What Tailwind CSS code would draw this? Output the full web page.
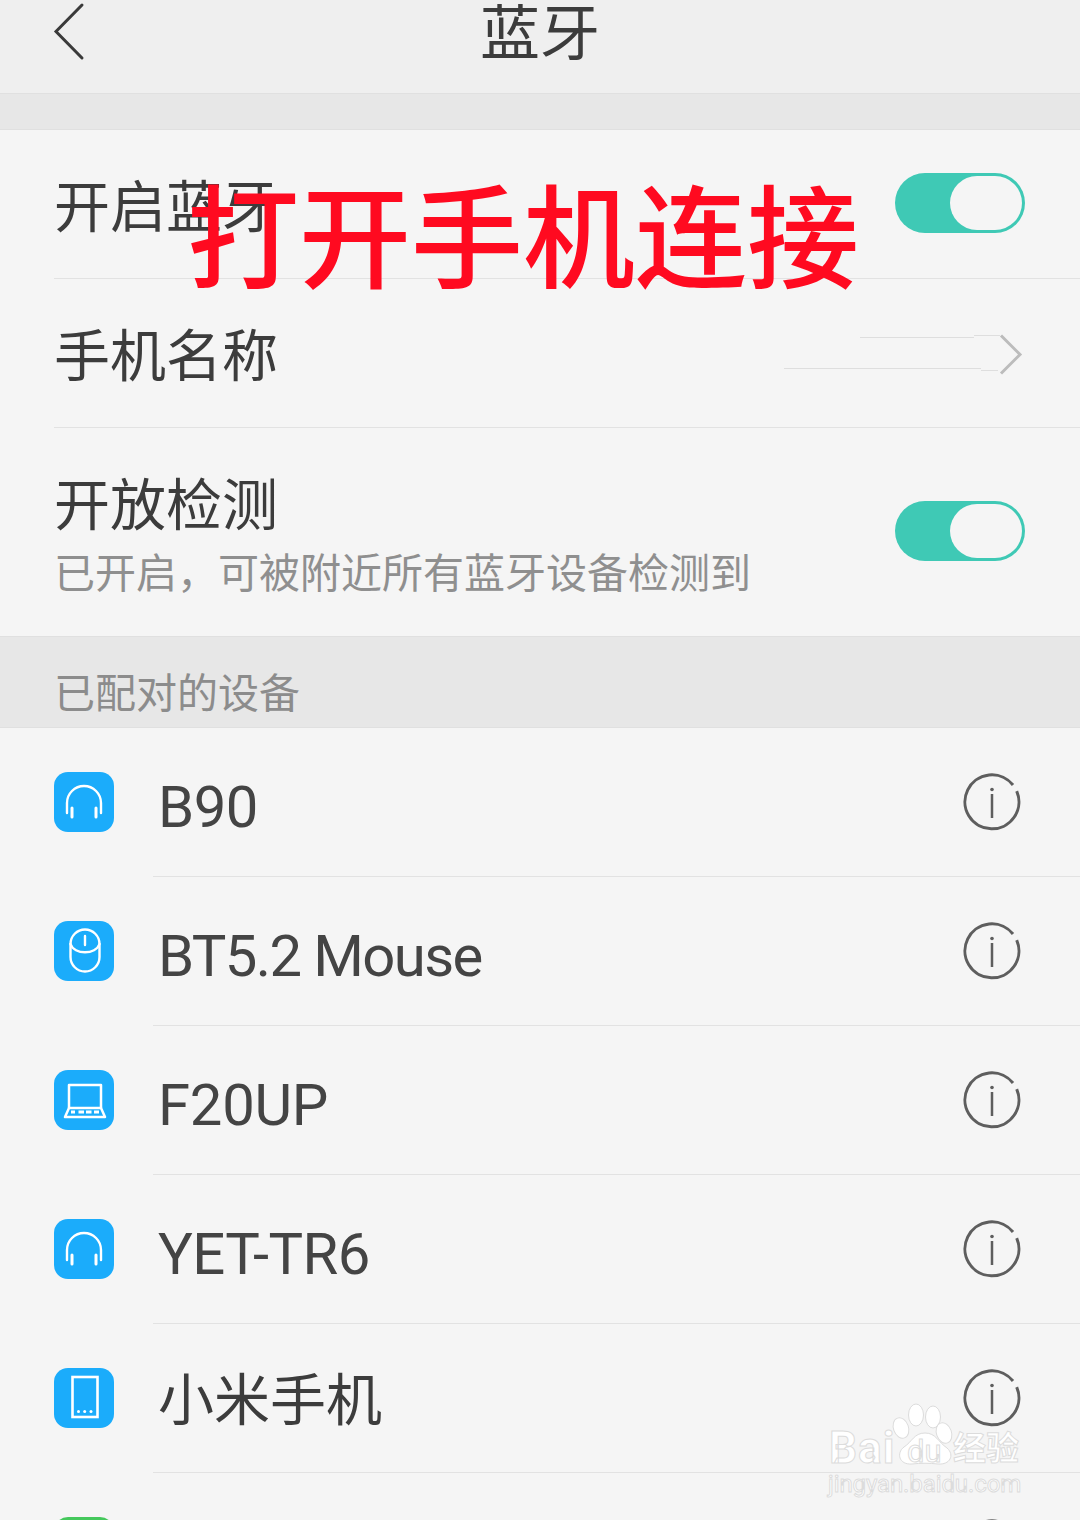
<!DOCTYPE html>
<html lang="zh-CN">
<head>
    <meta charset="UTF-8">
    <title>蓝牙</title>
    <script src="https://cdn.jsdelivr.net/npm/@tailwindcss/browser@4"></script>
</head>
<body class="bg-[#f5f5f5]">
<div class="relative w-[1080px] h-[1520px] overflow-hidden bg-[#f5f5f5] text-[#3c3c3c] font-['Roboto','Noto_Sans_CJK_SC',sans-serif]">

    <!-- header -->
    <header class="h-[94px] grid grid-cols-[1fr_auto_1fr] items-start bg-[#efefef] border-b border-[#e0e0e0]">
        <svg class="ml-[52px] mt-[2px]" width="36" height="60" viewBox="0 0 36 60" fill="none" stroke="#3a3a3a" stroke-width="3" stroke-linecap="round"><path d="M30 3 L4 29.5 L30 56"/></svg>
        <h1 class="text-[60px] leading-[70px] text-[#3c3c3c]">蓝牙</h1>
        <div></div>
    </header>
    <div class="h-[36px] bg-[#e7e7e7] border-b border-[#e0e0e0]"></div>

    <!-- settings -->
    <section class="pl-[54px]">
        <div class="h-[149px] flex items-center justify-between border-b border-[#e2e2e2]">
            <span class="text-[56px] leading-[64px] mt-[7px]">开启蓝牙</span>
            <div class="w-[130px] h-[60px] mr-[55px] mb-[3px] rounded-full bg-[#3fc9b5] flex justify-end p-[3px]">
                <div class="w-[72px] h-[54px] rounded-full bg-[#f5f5f5]"></div>
            </div>
        </div>
        <div class="relative h-[149px] flex items-center border-b border-[#e2e2e2]">
            <span class="text-[56px] leading-[64px] mt-[7px]">手机名称</span>
            <svg class="absolute left-[730px] top-[55px]" width="240" height="42" viewBox="0 0 240 42" fill="none">
                <path d="M76 3.5H190M190 1.5H216M0 34.5H197M197 36.5H214" stroke="#dedede" stroke-width="1"/>
                <path d="M217 1.5 L236 20.5 L217 39.5" stroke="#bcbcbc" stroke-width="3"/>
            </svg>
        </div>
        <div class="h-[208px] flex items-center justify-between">
            <div class="flex flex-col mt-[9px]">
                <span class="text-[56px] leading-[64px]">开放检测</span>
                <span class="text-[41px] leading-[50px] mt-[11px] text-[#8f8f8f]">已开启，可被附近所有蓝牙设备检测到</span>
            </div>
            <div class="w-[130px] h-[60px] mr-[55px] mb-[2px] rounded-full bg-[#3fc9b5] flex justify-end p-[3px]">
                <div class="w-[72px] h-[54px] rounded-full bg-[#f5f5f5]"></div>
            </div>
        </div>
    </section>

    <!-- paired list -->
    <div class="h-[92px] pl-[54px] pt-[32px] bg-[#e7e7e7] border-y border-[#e0e0e0] text-[41px] leading-[50px] text-[#8c8c8c]">已配对的设备</div>

    <ul>
        <li class="h-[149px] pl-[54px] flex items-center">
            <span class="w-[60px] h-[60px] shrink-0 rounded-[14px] bg-[#1bacfb] mb-[2px]">
                <svg width="60" height="60" viewBox="0 0 60 60" fill="none" stroke="#fff" stroke-linecap="round"><path stroke-width="2.4" d="M13 41V31A17 17 0 0 1 47 31V41"/><path stroke-width="3" d="M18 36V45M42 36V45"/></svg>
            </span>
            <div class="ml-[39px] flex-1 self-stretch flex items-center justify-between border-b border-[#e2e2e2]">
                <span class="text-[58px] leading-[70px] text-[#444] mt-[9px] ml-[5px] tracking-[-0.5px]">B90</span>
                <svg class="mr-[58px]" width="60" height="60" viewBox="0 0 60 60" fill="none" stroke="#5e5e5e"><path stroke-width="3" d="M54.7 19.15A27 27 0 1 1 51 13"/><path stroke-width="2.5" d="M30 22V46"/><circle cx="30" cy="17.5" r="1.8" fill="#5e5e5e" stroke="none"/></svg>
            </div>
        </li>
        <li class="h-[149px] pl-[54px] flex items-center">
            <span class="w-[60px] h-[60px] shrink-0 rounded-[14px] bg-[#1bacfb] mb-[2px]">
                <svg width="60" height="60" viewBox="0 0 60 60" fill="none" stroke="#fff" stroke-width="2.4" stroke-linecap="round"><rect x="16.5" y="8.5" width="29" height="42" rx="14.5"/><path d="M16.5 23C20 34 42 34 45.5 23M31 15V24"/></svg>
            </span>
            <div class="ml-[39px] flex-1 self-stretch flex items-center justify-between border-b border-[#e2e2e2]">
                <span class="text-[58px] leading-[70px] text-[#444] mt-[9px] ml-[5px] tracking-[-1.6px]">BT5.2 Mouse</span>
                <svg class="mr-[58px]" width="60" height="60" viewBox="0 0 60 60" fill="none" stroke="#5e5e5e"><path stroke-width="3" d="M54.7 19.15A27 27 0 1 1 51 13"/><path stroke-width="2.5" d="M30 22V46"/><circle cx="30" cy="17.5" r="1.8" fill="#5e5e5e" stroke="none"/></svg>
            </div>
        </li>
        <li class="h-[149px] pl-[54px] flex items-center">
            <span class="w-[60px] h-[60px] shrink-0 rounded-[14px] bg-[#1bacfb] mb-[2px]">
                <svg width="60" height="60" viewBox="0 0 60 60" fill="none" stroke="#fff" stroke-width="2.5" stroke-linejoin="round"><path d="M15 38V15H47V38"/><path d="M15 38L11 47H51L47 38Z"/><path d="M17 42H21M24.5 42H30M32 42H37.5M40 42H45" stroke-width="2.8"/></svg>
            </span>
            <div class="ml-[39px] flex-1 self-stretch flex items-center justify-between border-b border-[#e2e2e2]">
                <span class="text-[58px] leading-[70px] text-[#444] mt-[9px] ml-[5px] tracking-[-0.25px]">F20UP</span>
                <svg class="mr-[58px]" width="60" height="60" viewBox="0 0 60 60" fill="none" stroke="#5e5e5e"><path stroke-width="3" d="M54.7 19.15A27 27 0 1 1 51 13"/><path stroke-width="2.5" d="M30 22V46"/><circle cx="30" cy="17.5" r="1.8" fill="#5e5e5e" stroke="none"/></svg>
            </div>
        </li>
        <li class="h-[149px] pl-[54px] flex items-center">
            <span class="w-[60px] h-[60px] shrink-0 rounded-[14px] bg-[#1bacfb] mb-[2px]">
                <svg width="60" height="60" viewBox="0 0 60 60" fill="none" stroke="#fff" stroke-linecap="round"><path stroke-width="2.4" d="M13 41V31A17 17 0 0 1 47 31V41"/><path stroke-width="3" d="M18 36V45M42 36V45"/></svg>
            </span>
            <div class="ml-[39px] flex-1 self-stretch flex items-center justify-between border-b border-[#e2e2e2]">
                <span class="text-[58px] leading-[70px] text-[#444] mt-[9px] ml-[5px] tracking-[-0.5px]">YET-TR6</span>
                <svg class="mr-[58px]" width="60" height="60" viewBox="0 0 60 60" fill="none" stroke="#5e5e5e"><path stroke-width="3" d="M54.7 19.15A27 27 0 1 1 51 13"/><path stroke-width="2.5" d="M30 22V46"/><circle cx="30" cy="17.5" r="1.8" fill="#5e5e5e" stroke="none"/></svg>
            </div>
        </li>
        <li class="h-[149px] pl-[54px] flex items-center">
            <span class="w-[60px] h-[60px] shrink-0 rounded-[14px] bg-[#1bacfb] mb-[2px]">
                <svg width="60" height="60" viewBox="0 0 60 60" fill="none" stroke="#fff" stroke-width="2.6"><rect x="18.5" y="9" width="25" height="40"/><g fill="#fff" stroke="none"><circle cx="24.5" cy="43.5" r="1.5"/><circle cx="30.7" cy="43.5" r="1.5"/><circle cx="37" cy="43.5" r="1.5"/></g></svg>
            </span>
            <div class="ml-[39px] flex-1 self-stretch flex items-center justify-between border-b border-[#e2e2e2]">
                <span class="text-[56px] leading-[70px] mt-[5px] ml-[5px]">小米手机</span>
                <svg class="mr-[58px]" width="60" height="60" viewBox="0 0 60 60" fill="none" stroke="#5e5e5e"><path stroke-width="3" d="M54.7 19.15A27 27 0 1 1 51 13"/><path stroke-width="2.5" d="M30 22V46"/><circle cx="30" cy="17.5" r="1.8" fill="#5e5e5e" stroke="none"/></svg>
            </div>
        </li>
        <li class="h-[149px] pl-[54px] flex items-center">
            <span class="w-[60px] h-[60px] shrink-0 rounded-[14px] bg-[#45c85c] mb-[2px]"></span>
            <div class="ml-[39px] flex-1 self-stretch flex items-center justify-end">
                <svg class="mr-[58px]" width="60" height="60" viewBox="0 0 60 60" fill="none" stroke="#5e5e5e"><path stroke-width="3" d="M54.7 19.15A27 27 0 1 1 51 13"/></svg>
            </div>
        </li>
    </ul>

    <!-- red annotation over the page -->
    <div class="absolute left-[187px] top-[177px] text-[112px] leading-[130px] font-medium whitespace-nowrap text-[#ff0a20]">打开手机连接</div>

    <!-- watermark -->
    <div class="absolute left-[826px] top-[1400px] w-[200px] h-[100px] text-white">
        <svg class="absolute left-0 top-0" width="200" height="70" viewBox="0 0 200 70" fill="#fff" stroke="#dcdcdc" stroke-width="1">
            <ellipse cx="90" cy="15" rx="7.5" ry="11"/>
            <ellipse cx="107" cy="17" rx="7.5" ry="11" />
            <ellipse cx="75" cy="28" rx="7.5" ry="10.5" transform="rotate(-20 75 28)"/>
            <ellipse cx="118" cy="33" rx="7.5" ry="10.5" transform="rotate(-20 118 33)"/>
            <path d="M99 33C88 33 86 42 78 47C70 53 73 65 86 64C94 63 104 63 112 64C124 65 129 55 121 48C112 42 110 33 99 33Z"/>
        </svg>
        <span class="absolute left-[3px] top-[25px] text-[44px] leading-[46px] font-bold tracking-[1px] [-webkit-text-stroke:1px_#dcdcdc]">Bai</span>
        <span class="absolute left-[81px] top-[36px] text-[31px] leading-[32px] [-webkit-text-stroke:1px_#dcdcdc]">du</span>
        <span class="absolute left-[127px] top-[30px] text-[33px] leading-[38px] font-bold [-webkit-text-stroke:1px_#dcdcdc]">经验</span>
        <span class="absolute left-[2px] top-[70px] text-[24px] leading-[28px] tracking-[-0.1px] whitespace-nowrap [-webkit-text-stroke:1px_#dcdcdc]">jingyan.baidu.com</span>
    </div>
</div>
</body>
</html>
